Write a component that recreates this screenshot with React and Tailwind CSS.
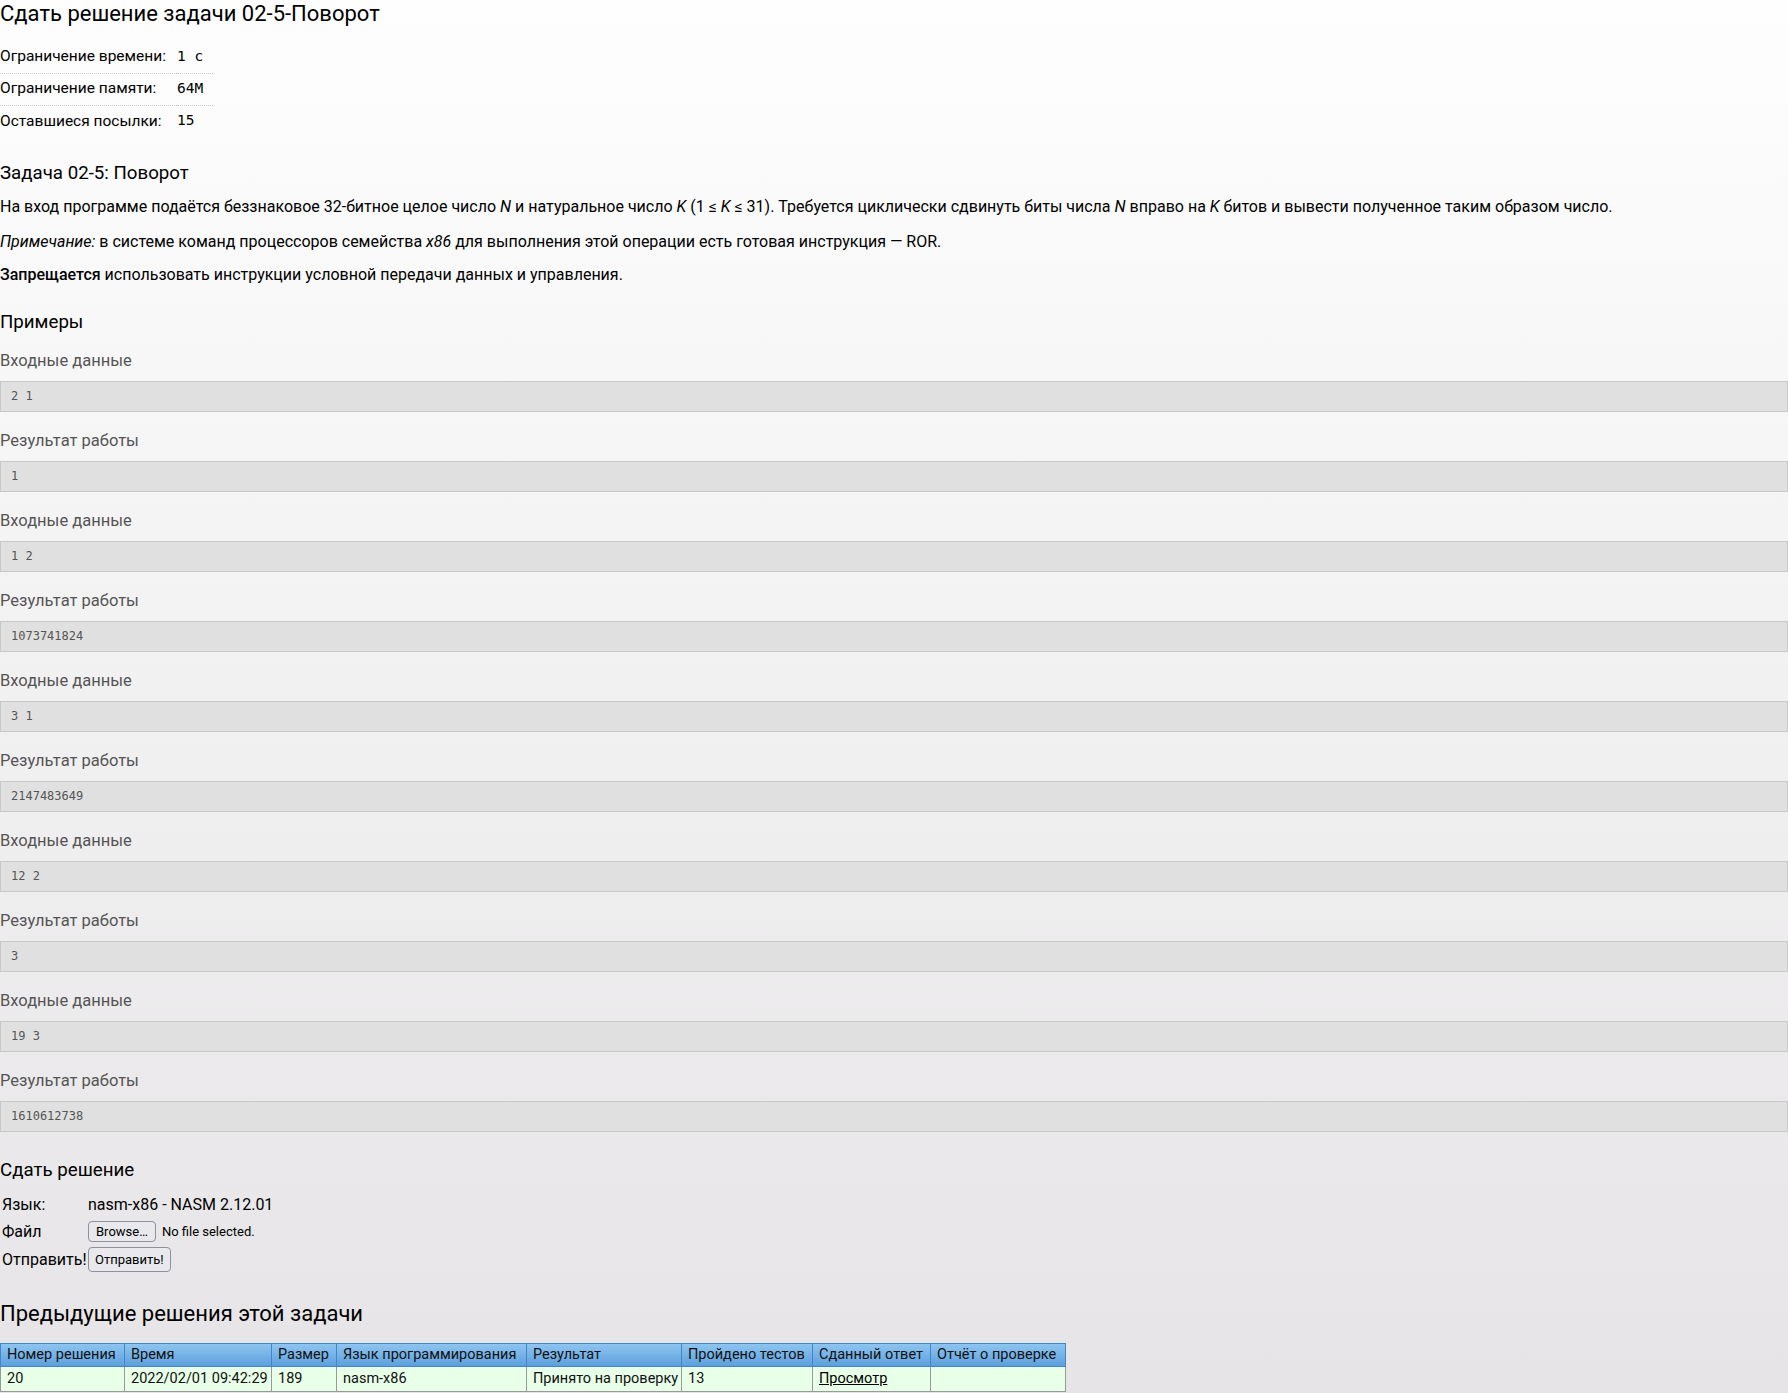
const limits = [
  { label: 'Ограничение времени:', value: '1 с' },
  { label: 'Ограничение памяти:', value: '64M' },
  { label: 'Оставшиеся посылки:', value: '15' },
];

const samples = [
  ['2 1', '1'],
  ['1 2', '1073741824'],
  ['3 1', '2147483649'],
  ['12 2', '3'],
  ['19 3', '1610612738'],
];

const columns = [
  { title: 'Номер решения', w: 'w-[124px]' },
  { title: 'Время', w: 'w-[147px]' },
  { title: 'Размер', w: 'w-[65px]' },
  { title: 'Язык программирования', w: 'w-[190px]' },
  { title: 'Результат', w: 'w-[155px]' },
  { title: 'Пройдено тестов', w: 'w-[131px]' },
  { title: 'Сданный ответ', w: 'w-[118px]' },
  { title: 'Отчёт о проверке', w: 'w-[135px]' },
];

const mono = "font-['DejaVu_Sans_Mono',monospace]";
const cell = 'border border-[#999] px-[6px] py-0 whitespace-nowrap';

function Sample({ label, text }) {
  return (
    <div>
      <div className="mt-[17px] mb-[8px] h-[24px] leading-[24px] text-[16.5px] text-[#555]">{label}</div>
      <pre className={`h-[31px] leading-[29px] bg-[#e0e0e0] border border-[#c8c8c8] pl-[10px] text-[12px] text-[#555] ${mono}`}>
        {text}
      </pre>
    </div>
  );
}

export default function App() {
  return (
    <div className="min-h-screen bg-gradient-to-b from-[#fefefe] to-[#e6e4e6] text-black font-['Roboto',sans-serif]">
      <h1 className="h-[28px] leading-[28px] text-[22px]">Сдать решение задачи 02-5-Поворот</h1>

      <table className="mt-[13px] w-[213px] table-fixed border-collapse text-[15.5px]">
        <tbody>
          {limits.map((row, i) => (
            <tr
              key={row.label}
              className={`h-[32px] ${i < limits.length - 1 ? 'border-b border-dotted border-[#ccc]' : ''}`}
            >
              <td className="p-0 w-[177px] whitespace-nowrap">{row.label}</td>
              <td className={`p-0 text-[14.5px] whitespace-pre ${mono}`}>{row.value}</td>
            </tr>
          ))}
        </tbody>
      </table>

      <h3 className="mt-[24px] h-[24px] leading-[24px] text-[18.7px]">Задача 02-5: Поворот</h3>
      <p className="mt-[10px] leading-[24px] text-[16px]">
        На вход программе подаётся беззнаковое 32-битное целое число <i>N</i> и натуральное число <i>K</i> (1 ≤ <i>K</i> ≤ 31).
        Требуется циклически сдвинуть биты числа <i>N</i> вправо на <i>K</i> битов и вывести полученное таким образом число.
      </p>
      <p className="mt-[11px] leading-[24px] text-[16px]">
        <i>Примечание:</i> в системе команд процессоров семейства <i>x86</i> для выполнения этой операции есть готовая
        инструкция — ROR.
      </p>
      <p className="mt-[9px] leading-[24px] text-[16px]">
        <b className="font-medium">Запрещается</b> использовать инструкции условной передачи данных и управления.
      </p>

      <h3 className="mt-[23px] h-[24px] leading-[24px] text-[18.7px]">Примеры</h3>
      <div className="-mt-[2px]">
        {samples.map(([input, output], i) => (
          <div key={i}>
            <Sample label="Входные данные" text={input} />
            <Sample label="Результат работы" text={output} />
          </div>
        ))}
      </div>

      <h3 className="mt-[26px] h-[24px] leading-[24px] text-[18.7px]">Сдать решение</h3>
      <table className="mt-[10px] border-collapse text-[16px]">
        <tbody>
          <tr className="h-[26px]">
            <td className="p-0 pl-[2px] w-[88px]">Язык:</td>
            <td className="p-0">nasm-x86 - NASM 2.12.01</td>
          </tr>
          <tr className="h-[27px]">
            <td className="p-0 pl-[2px]">Файл</td>
            <td className="p-0">
              <div className="flex items-center gap-[6px]">
                <button className="h-[21px] px-[7px] text-[13px] bg-[#e9e9ed] border border-[#8f8f9d] rounded-[4px]">
                  Browse…
                </button>
                <span className="text-[13px]">No file selected.</span>
              </div>
            </td>
          </tr>
          <tr className="h-[29px]">
            <td className="p-0 pl-[2px] whitespace-nowrap">Отправить!</td>
            <td className="p-0">
              <button className="h-[25px] px-[6px] text-[13px] bg-[#e9e9ed] border border-[#8f8f9d] rounded-[4px]">
                Отправить!
              </button>
            </td>
          </tr>
        </tbody>
      </table>

      <h2 className="mt-[26px] h-[28px] leading-[28px] text-[22px]">Предыдущие решения этой задачи</h2>
      <table className="mt-[15px] border-collapse text-[14.5px] text-[#111] table-fixed w-[1066px]">
        <thead>
          <tr className="h-[23px] bg-gradient-to-b from-[#8ec5f0] to-[#5b9edb]">
            {columns.map((c) => (
              <th key={c.title} className={`${c.w} border border-[#3f86cc] px-[6px] py-0 text-left font-normal whitespace-nowrap`}>
                {c.title}
              </th>
            ))}
          </tr>
        </thead>
        <tbody>
          <tr className="h-[25px] bg-[#e8ffe8]">
            <td className={cell}>20</td>
            <td className={cell}>2022/02/01 09:42:29</td>
            <td className={cell}>189</td>
            <td className={cell}>nasm-x86</td>
            <td className={cell}>Принято на проверку</td>
            <td className={cell}>13</td>
            <td className={cell}>
              <a href="#" className="underline text-black">Просмотр</a>
            </td>
            <td className={cell}></td>
          </tr>
        </tbody>
      </table>
    </div>
  );
}
